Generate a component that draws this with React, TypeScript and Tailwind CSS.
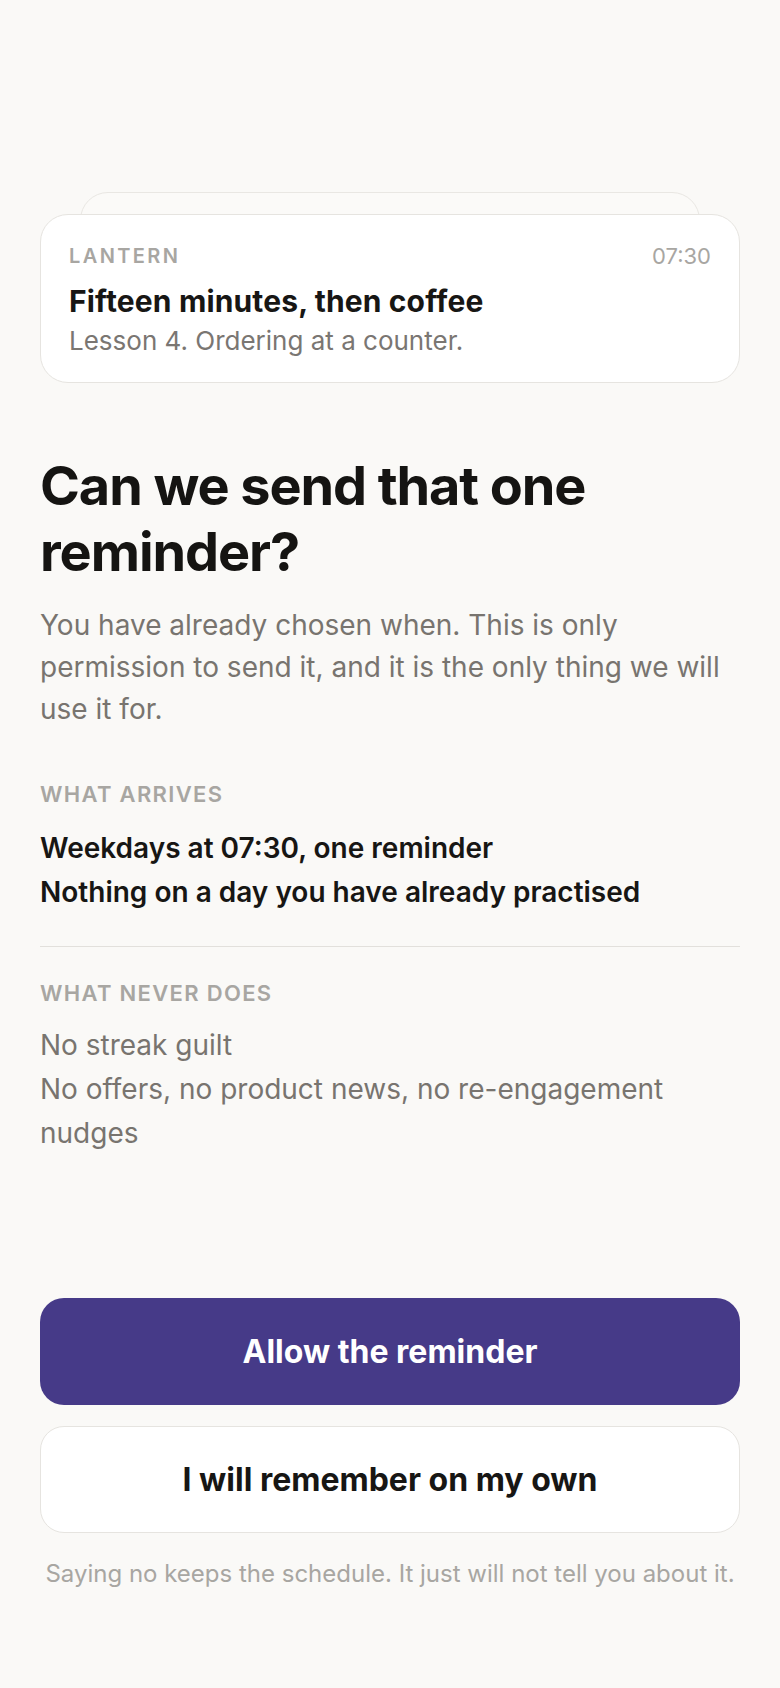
import React from 'react'

const arrives = ['Weekdays at 07:30, one reminder', 'Nothing on a day you have already practised']
const never = ['No streak guilt', 'No offers, no product news, no re-engagement nudges']

function NotificationPreview() {
  return (
    <div className="relative pt-[22px]">
      {/* stacked card behind */}
      <div className="absolute left-10 right-10 top-0 h-24 rounded-[28px] border border-[#e9e7e3] bg-[#fbfaf8]" />
      <div className="relative rounded-[28px] border border-[#e6e4e0] bg-white px-7 pt-[27px] pb-[24px]">
        <div className="flex items-center justify-between leading-[28px]">
          <span className="text-[20px] font-semibold tracking-[0.12em] text-[#a8a6a2]">LANTERN</span>
          <span className="text-[22px] text-[#a8a6a2]">07:30</span>
        </div>
        <p className="mt-3 text-[30px] leading-[38px] font-bold tracking-[0.005em] text-[#171614]">
          Fifteen minutes, then coffee
        </p>
        <p className="mt-[4px] text-[26px] leading-[34px] text-[#7a7672]">Lesson 4. Ordering at a counter.</p>
      </div>
    </div>
  )
}

export default function App() {
  return (
    <div
      className="min-h-[1688px] bg-[#faf9f7] flex flex-col px-10 pt-[192px] pb-[98px]"
      style={{ fontFamily: 'Inter, "Noto Sans", sans-serif' }}
    >
      <NotificationPreview />

      <h1 className="mt-[70px] text-[54px] leading-[66px] font-bold tracking-[-0.02em] text-[#151412]">
        Can we send that one reminder?
      </h1>
      <p className="mt-[19px] text-[28px] leading-[42px] text-[#78746f]">
        You have already chosen when. This is only permission to send it, and it is the only thing we will use it for.
      </p>

      <div className="mt-[50px]">
        <h2 className="text-[22px] leading-[28px] font-semibold tracking-[0.06em] text-[#a8a6a2]">WHAT ARRIVES</h2>
        <ul className="mt-[18px]">
          {arrives.map((item) => (
            <li key={item} className="text-[28px] leading-[44px] font-semibold text-[#171614]">
              {item}
            </li>
          ))}
        </ul>
      </div>

      <div className="mt-8 border-t border-[#e2e0dc] pt-8">
        <h2 className="text-[22px] leading-[28px] font-semibold tracking-[0.06em] text-[#a8a6a2]">WHAT NEVER DOES</h2>
        <ul className="mt-[16px]">
          {never.map((item) => (
            <li key={item} className="text-[28px] leading-[44px] text-[#78746f]">
              {item}
            </li>
          ))}
        </ul>
      </div>

      <div className="mt-auto flex flex-col">
        <button className="h-[107px] rounded-3xl bg-[#463a88] text-[32px] font-bold text-white">
          Allow the reminder
        </button>
        <button className="mt-[21px] h-[107px] rounded-3xl border border-[#e6e4e0] bg-white text-[32px] font-bold text-[#171614]">
          I will remember on my own
        </button>
        <p className="mt-[25px] text-center text-[24px] leading-[32px] text-[#a8a6a2]">
          Saying no keeps the schedule. It just will not tell you about it.
        </p>
      </div>
    </div>
  )
}
